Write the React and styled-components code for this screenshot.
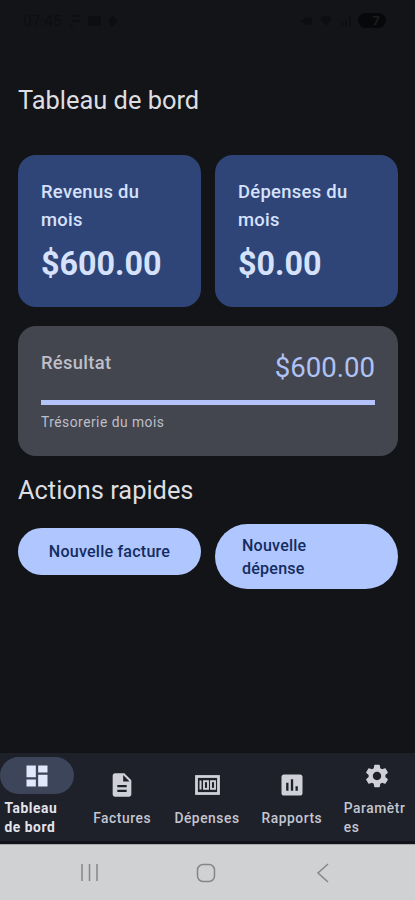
import React from 'react';
import styled, { createGlobalStyle } from 'styled-components';
import {
  MdAssessment,
  MdDashboard,
  MdDescription,
  MdSettings
} from 'react-icons/md';

const GlobalStyle = createGlobalStyle`
  * {
    box-sizing: border-box;
  }

  body {
    margin: 0;
    background: #131418;
    font-family: Roboto, "Liberation Sans", sans-serif;
  }
`;

const Screen = styled.div`
  display: flex;
  flex-direction: column;
  width: 415px;
  height: 900px;
  overflow: hidden;
  background: #131418;
`;

const StatusBar = styled.div`
  display: flex;
  justify-content: space-between;
  align-items: center;
  height: 41px;
  padding: 0 29px 0 23px;
  color: #0d0e11;
  font-size: 15.5px;
`;

const StatusGroup = styled.div`
  display: flex;
  align-items: center;
  gap: 7px;
`;

const Battery = styled.div`
  width: 28px;
  height: 15px;
  border-radius: 8px;
  background: #07080a;
  color: #1c1d21;
  font-size: 13px;
  font-weight: 700;
  line-height: 15px;
  text-align: right;
  padding-right: 6px;
`;

const Content = styled.main`
  flex: 1;
  padding: 0 17px 0 18px;
`;

const Title = styled.h1`
  margin: 0;
  padding-top: 43px;
  height: 114px;
  color: #dedee0;
  font-size: 25.4px;
  font-weight: 400;
  line-height: 32px;
`;

const Row = styled.div`
  display: grid;
  grid-template-columns: 183px 183px;
  justify-content: space-between;
  align-items: start;
`;

const Card = styled.section`
  height: 152px;
  padding: 23px;
  border-radius: 18px;
  background: #2f4578;
  color: #d6e1fc;
`;

const CardLabel = styled.div`
  font-size: 18.4px;
  font-weight: 500;
  line-height: 27.6px;
  letter-spacing: 0.3px;
`;

const Amount = styled.div`
  padding-top: 11px;
  font-size: 32.3px;
  font-weight: 700;
  line-height: 41px;
`;

const ResultCard = styled.section`
  height: 130px;
  margin-top: 19px;
  padding: 23px;
  border-radius: 18px;
  background: #44464f;
  color: #bebfc8;
`;

const ResultHead = styled.div`
  display: flex;
  justify-content: space-between;
  height: 51px;
`;

const Result = styled.div`
  color: #afc2f6;
  font-size: 27.6px;
  line-height: 37px;
`;

const Track = styled.div`
  height: 5px;
  background: #b4c4fa;
`;

const Note = styled.div`
  padding-top: 8px;
  font-size: 13.8px;
  line-height: 18px;
  letter-spacing: 0.5px;
`;

const SubTitle = styled.h2`
  margin: 17px 0;
  color: #dedee0;
  font-size: 25.4px;
  font-weight: 400;
  line-height: 34px;
`;

const Button = styled.button`
  width: 100%;
  height: ${({ $tall }) => ($tall ? 65 : 47)}px;
  margin: ${({ $tall }) => ($tall ? 0 : 4)}px 0 0;
  padding: 0 27px;
  border: 0;
  border-radius: 33px;
  background: #afc6ff;
  color: #142c60;
  font: inherit;
  font-size: 16.1px;
  font-weight: 500;
  line-height: 23px;
  letter-spacing: 0.2px;
  text-align: ${({ $tall }) => ($tall ? 'left' : 'center')};
`;

const Nav = styled.nav`
  display: grid;
  grid-template-columns: repeat(5, 1fr);
  align-items: center;
  column-gap: 9.2px;
  height: 91px;
  border-bottom: 3px solid #12131a;
  background: #1e202a;
`;

const NavItem = styled.a`
  display: flex;
  flex-direction: column;
  align-items: center;
  color: #d0d1d8;
`;

const Indicator = styled.span`
  display: flex;
  justify-content: center;
  align-items: center;
  width: 74px;
  height: 37px;
  margin-left: -1px;
  border-radius: 19px;
  background: ${({ $active }) => ($active ? '#3d455a' : 'transparent')};
  color: ${({ $active }) => ($active ? '#e2e8fb' : '#d0d1d8')};
  font-size: 28px;
`;

const NavLabel = styled.span`
  align-self: ${({ $wrap }) => ($wrap ? 'flex-start' : 'center')};
  margin-left: ${({ $wrap }) => ($wrap ? 4.5 : -1)}px;
  padding-top: 5px;
  color: ${({ $active }) => ($active ? '#e3e4ea' : '#c4c6d0')};
  font-size: 13.8px;
  font-weight: ${({ $active }) => ($active ? 700 : 500)};
  line-height: 19px;
  letter-spacing: 0.55px;
  white-space: pre-line;
`;

const SystemBar = styled.footer`
  height: 56px;
  border-top: 1px solid #a9aaae;
  background: #d0d1d3;

  svg {
    display: block;
  }
`;

const BanknoteIcon = () => (
  <svg width="28" height="28" viewBox="0 0 28 28" fill="none" stroke="currentColor">
    <rect x="3.500" y="5.500" width="22" height="17" strokeWidth="2.800" />
    <path d="M7.500 9.500v9" strokeWidth="2" />
    <rect x="11" y="10.200" width="4" height="7.600" strokeWidth="1.900" />
    <rect x="18" y="10.200" width="4" height="7.600" strokeWidth="1.900" />
  </svg>
);

const cards = [
  { label: 'Revenus du mois', amount: '$600.00' },
  { label: 'Dépenses du mois', amount: '$0.00' }
];

const tabs = [
  { label: 'Tableau\nde bord', Icon: MdDashboard, active: true },
  { label: 'Factures', Icon: MdDescription },
  { label: 'Dépenses', Icon: BanknoteIcon },
  { label: 'Rapports', Icon: MdAssessment },
  { label: 'Paramètr\nes', Icon: MdSettings }
];

const App = () => (
  <Screen>
    <GlobalStyle />
    <StatusBar>
      <StatusGroup>
        <span>07:45</span>
        <svg width="52" height="14" fill="currentColor">
          <path d="M2 1h10v2H2zM3 6h8v2H3zM1 11h3v2H1zM19 2h13v10H19zM43 1l6 6-6 6-4-6z" />
        </svg>
      </StatusGroup>
      <StatusGroup>
        <svg width="50" height="14" fill="currentColor">
          <path d="M0 7l5-4 6 1v7H5zM19 4q6-5 12 0l-6 8zM40 12V8h2v4zM44 12V5h2v7zM48 12V2h2v10z" />
        </svg>
        <Battery>7</Battery>
      </StatusGroup>
    </StatusBar>
    <Content>
      <Title>Tableau de bord</Title>
      <Row>
        {cards.map(({ label, amount }) => (
          <Card key={label}>
            <CardLabel>{label}</CardLabel>
            <Amount>{amount}</Amount>
          </Card>
        ))}
      </Row>
      <ResultCard>
        <ResultHead>
          <CardLabel>Résultat</CardLabel>
          <Result>$600.00</Result>
        </ResultHead>
        <Track />
        <Note>Trésorerie du mois</Note>
      </ResultCard>
      <SubTitle>Actions rapides</SubTitle>
      <Row>
        <Button>Nouvelle facture</Button>
        <Button $tall>
          Nouvelle
          <br />
          dépense
        </Button>
      </Row>
    </Content>
    <Nav>
      {tabs.map(({ label, Icon, active }) => (
        <NavItem key={label}>
          <Indicator $active={active}>
            <Icon />
          </Indicator>
          <NavLabel $active={active} $wrap={label.includes('\n')}>
            {label}
          </NavLabel>
        </NavItem>
      ))}
    </Nav>
    <SystemBar>
      <svg width="415" height="55" fill="none" stroke="#858689" strokeWidth="1.5">
        <path d="M82 19v17M89.5 19v17M97 19v17" />
        <rect x="197.5" y="19.5" width="17" height="17" rx="5.5" />
        <path d="M328 19l-10 9 10 9" />
      </svg>
    </SystemBar>
  </Screen>
);

export default App;
